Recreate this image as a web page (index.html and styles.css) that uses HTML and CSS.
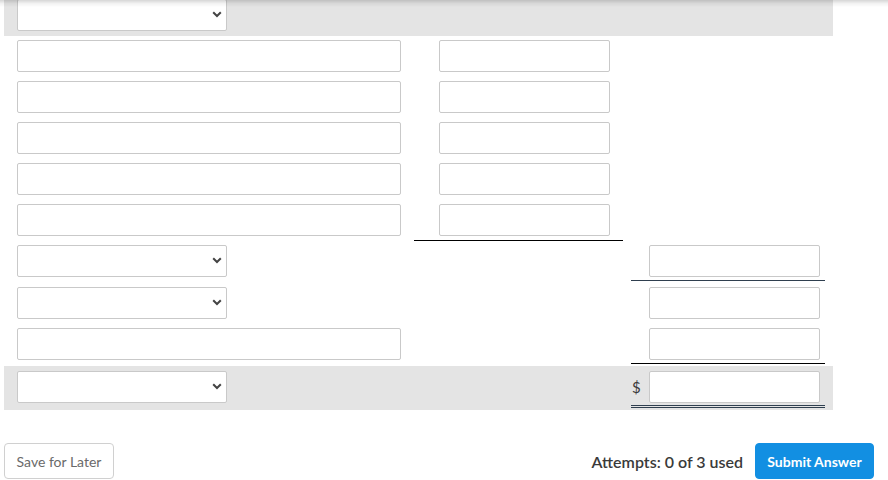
FILE: index.html
```html
<!DOCTYPE html>
<html>
<head>
<meta charset="utf-8">
<link rel="stylesheet" href="styles.css">
</head>
<body>
<div class="topshadow"></div>
<div class="sheet">
  <div class="row gray r0">
    <div class="c c1"><div class="sel"><select class="fld fsel"><option></option></select><svg class="chev" width="10" height="7" viewBox="0 0 10 7"><path d="M1.2 1.2 L5 5 L8.8 1.2" fill="none" stroke="#444" stroke-width="2"/></svg></div></div>
    <div class="c c2"></div>
    <div class="c c3"></div>
  </div>
  <div class="row">
    <div class="c c1"><input class="fld wide" type="text"></div>
    <div class="c c2"><input class="fld narrow" type="text"></div>
    <div class="c c3"></div>
  </div>
  <div class="row">
    <div class="c c1"><input class="fld wide" type="text"></div>
    <div class="c c2"><input class="fld narrow" type="text"></div>
    <div class="c c3"></div>
  </div>
  <div class="row">
    <div class="c c1"><input class="fld wide" type="text"></div>
    <div class="c c2"><input class="fld narrow" type="text"></div>
    <div class="c c3"></div>
  </div>
  <div class="row">
    <div class="c c1"><input class="fld wide" type="text"></div>
    <div class="c c2"><input class="fld narrow" type="text"></div>
    <div class="c c3"></div>
  </div>
  <div class="row">
    <div class="c c1"><input class="fld wide" type="text"></div>
    <div class="c c2 rule-black"><input class="fld narrow" type="text"></div>
    <div class="c c3"></div>
  </div>
  <div class="row h42">
    <div class="c c1"><div class="sel"><select class="fld fsel"><option></option></select><svg class="chev" width="10" height="7" viewBox="0 0 10 7"><path d="M1.2 1.2 L5 5 L8.8 1.2" fill="none" stroke="#444" stroke-width="2"/></svg></div></div>
    <div class="c c2"></div>
    <div class="c c3 under slate"><span class="cur"></span><input class="fld narrow" type="text"></div>
  </div>
  <div class="row">
    <div class="c c1"><div class="sel"><select class="fld fsel"><option></option></select><svg class="chev" width="10" height="7" viewBox="0 0 10 7"><path d="M1.2 1.2 L5 5 L8.8 1.2" fill="none" stroke="#444" stroke-width="2"/></svg></div></div>
    <div class="c c2"></div>
    <div class="c c3"><span class="cur"></span><input class="fld narrow" type="text"></div>
  </div>
  <div class="row h42">
    <div class="c c1"><input class="fld wide" type="text"></div>
    <div class="c c2"></div>
    <div class="c c3 under black"><span class="cur"></span><input class="fld narrow" type="text"></div>
  </div>
  <div class="row gray r9">
    <div class="c c1"><div class="sel"><select class="fld fsel"><option></option></select><svg class="chev" width="10" height="7" viewBox="0 0 10 7"><path d="M1.2 1.2 L5 5 L8.8 1.2" fill="none" stroke="#444" stroke-width="2"/></svg></div></div>
    <div class="c c2"></div>
    <div class="c c3 dbl"><span class="cur">$</span><input class="fld narrow" type="text"></div>
  </div>
</div>
<div class="footer">
  <button class="btn save" type="button">Save for Later</button>
  <div class="right">
    <span class="attempts">Attempts: 0 of 3 used</span>
    <button class="btn submit" type="button">Submit Answer</button>
  </div>
</div>
</body>
</html>
```
FILE: styles.css
```css
* { box-sizing: border-box; }
html, body { margin: 0; padding: 0; background: #fff; }
body {
  font-family: Lato, "Open Sans", "Liberation Sans", sans-serif;
  color: #333;
  width: 888px;
  height: 480px;
  overflow: hidden;
}
.topshadow {
  position: fixed;
  top: 0; left: 0; right: 0;
  height: 7px;
  background: linear-gradient(rgba(0,0,0,0.16), rgba(0,0,0,0.05) 50%, rgba(0,0,0,0));
  pointer-events: none;
  z-index: 5;
}
.sheet { margin-left: 4px; width: 829px; }
.row {
  display: grid;
  grid-template-columns: 402px 209px 194px;
  column-gap: 8px;
  height: 41px;
}
.row.h42 { height: 42px; }
.gray { background: #e4e4e4; }
.r0 { height: 36px; }
.r9 { height: 44px; }
.c { padding-top: 4px; }
.r0 .c { padding-top: 0; margin-top: -1px; }
.r9 .c { padding-top: 5px; }
.c1 { padding-left: 13px; }
.c2 { padding-left: 25px; padding-right: 13px; }
.c3 { padding-left: 18px; padding-right: 5px; display: flex; align-items: flex-start; position: relative; }
.rule-black { border-bottom: 1px solid #000; }
.under { align-self: start; height: 40px; }
.under.slate { border-bottom: 1px solid #2f3f4f; }
.under.black { border-bottom: 1px solid #000; }
.dbl { align-self: start; height: 42px; border-bottom: 3px double #2f3f4f; padding-bottom: 2px; }
.cur {
  position: absolute;
  left: 1px;
  top: 5px;
  height: 32px;
  line-height: 32px;
  font-size: 15px;
  color: #3a3a3a;
}
.fld {
  display: block;
  height: 32px;
  border: 1px solid #c9c9c9;
  border-radius: 2px;
  background: #fff;
  margin: 0;
  padding: 0 6px;
  font: inherit;
  outline: none;
}
.wide { width: 384px; }
.narrow { width: 171px; }
.sel { position: relative; width: 210px; height: 32px; }
.fsel {
  width: 210px;
  -webkit-appearance: none;
  appearance: none;
}
.chev { position: absolute; right: 5px; top: 12px; pointer-events: none; }
.footer {
  display: flex;
  justify-content: space-between;
  align-items: center;
  margin-top: 33px;
  padding: 0 14px 0 4px;
}
.right { display: flex; align-items: center; gap: 12px; }
.btn {
  height: 36px;
  border-radius: 4px;
  font-family: inherit;
  cursor: pointer;
  margin: 0;
}
.save {
  width: 110px;
  background: #fff;
  border: 1px solid #d0d0d0;
  color: #6a6a6a;
  font-size: 14px;
  padding: 0;
}
.attempts { font-size: 16px; font-weight: 600; color: #3a3a3a; }
.submit {
  width: 119px;
  background: #128fe2;
  border: 1px solid #128fe2;
  color: #fff;
  font-size: 14px;
  font-weight: 700;
  padding: 0;
}
```
